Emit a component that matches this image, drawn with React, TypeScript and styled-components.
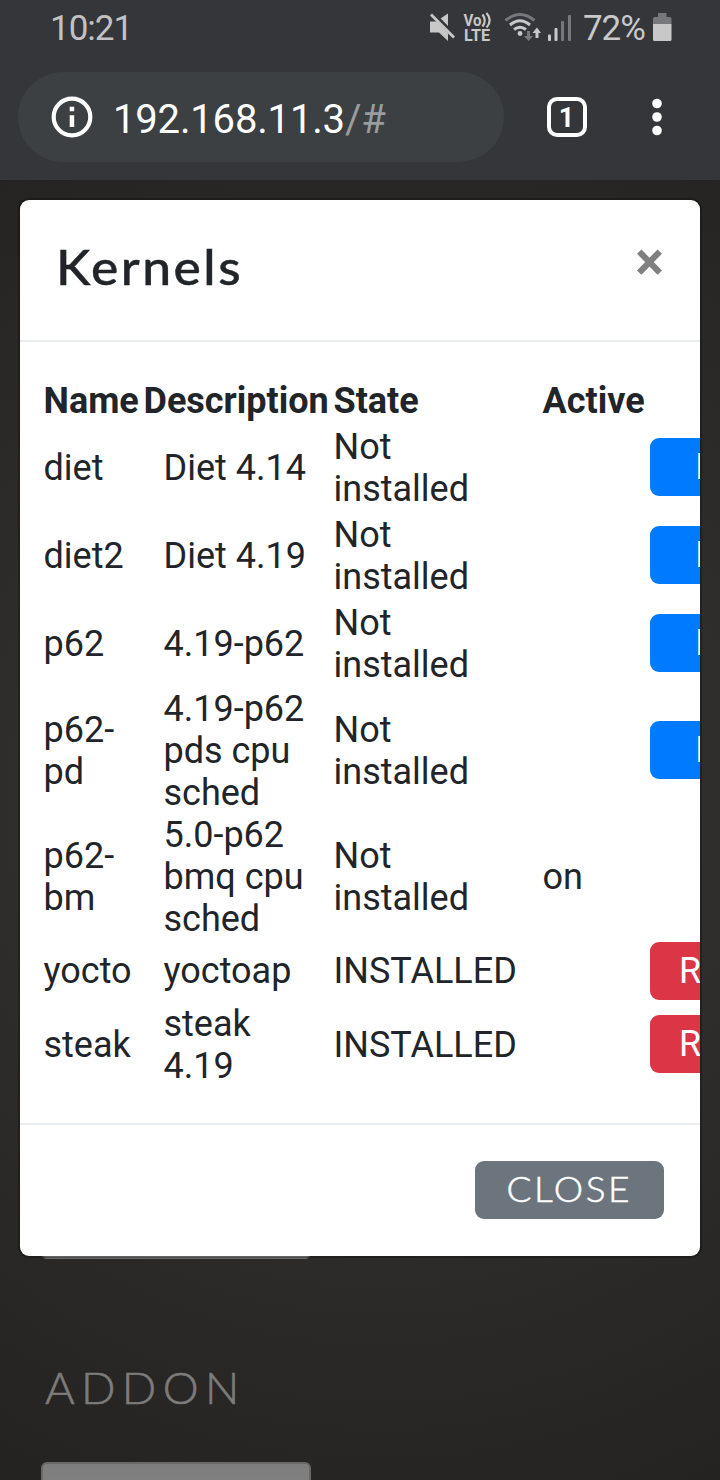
import React from "react";
import styled, { createGlobalStyle } from "styled-components";

const GlobalStyle = createGlobalStyle`
  * { box-sizing: border-box; }
  body { margin: 0; background: #262523; font-family: Roboto, "Liberation Sans", sans-serif; color: #212529; }
`;

const Screen = styled.div`
  width: 720px;
  height: 1480px;
  overflow: hidden;
  display: flex;
  flex-direction: column;
`;

const Chrome = styled.header`
  height: 180px;
  flex: none;
  background: #35363a;
`;

const StatusBar = styled.div`
  height: 56px;
  padding: 0 48px 0 50px;
  display: flex;
  justify-content: space-between;
  color: #c8c8c9;
  font-size: 35px;
  line-height: 58px;
`;

const Clock = styled.span`
  letter-spacing: -1px;
  color: #c2c2c3;
`;

const StatusIcons = styled.div`
  display: flex;
`;

const Percent = styled.span`
  width: 69px;
  margin-left: -1px;
  margin-right: 1px;
  letter-spacing: -1.1px;
  white-space: nowrap;
`;

const AddressBar = styled.div`
  margin-top: 16px;
  padding-left: 18px;
  height: 90px;
  display: flex;
  align-items: center;
`;

const UrlPill = styled.div`
  width: 486px;
  height: 90px;
  border-radius: 45px;
  background: #3c4043;
  display: flex;
  align-items: center;
  padding-left: 33px;
  gap: 20px;
`;

const Url = styled.span`
  color: #fff;
  font-size: 40px;
  line-height: 48px;
  padding-top: 6px;
  letter-spacing: -0.17px;
`;

const UrlPath = styled.span`
  color: #9b9c9e;
`;

const TabCount = styled.div`
  margin-left: 43px;
  width: 40px;
  height: 40px;
  border: 4.5px solid #fff;
  border-radius: 10px;
  color: #fff;
  font-size: 27px;
  font-weight: 700;
  line-height: 34px;
  text-align: center;
  text-indent: -1px;
`;

const MenuIcon = styled.svg`
  margin-left: 60px;
`;

const Page = styled.main`
  position: relative;
  flex: 1;
  padding: 0 41px;
  display: flex;
  flex-direction: column;
  background: radial-gradient(circle 760px at 380px 620px, #31302e 0%, #2f2e2c 45%, #242321 100%);
`;

const Card = styled.div<{ $height: number }>`
  width: 270px;
  height: ${(p) => p.$height}px;
  flex: none;
  border: 2px solid #686868;
  border-radius: 6px;
  background: linear-gradient(#7e7e7e, #848484);
`;

const Spacer = styled.div`
  height: 1029px;
  flex: none;
`;

const SectionTitle = styled.h2`
  margin: 102px 0 47px 4px;
  height: 54px;
  align-self: flex-start;
  font-family: Lato, sans-serif;
  font-weight: 300;
  font-size: 43px;
  line-height: 54px;
  letter-spacing: 6px;
  transform: scaleX(1.055);
  transform-origin: left;
  color: #7c7c7b;
  -webkit-text-stroke: 0.6px #7c7c7b;
`;

const Dialog = styled.section`
  position: absolute;
  top: 20px;
  left: 20px;
  width: 680px;
  height: 1056px;
  display: flex;
  flex-direction: column;
  background: #fff;
  border-radius: 9px;
  box-shadow: 0 0 0 2px rgba(0, 0, 0, 0.25);
  overflow: hidden;
`;

const DialogHeader = styled.div`
  height: 142px;
  padding: 35px 36px 0 36px;
  display: flex;
  justify-content: space-between;
  border-bottom: 2px solid #e9ecef;
`;

const DialogTitle = styled.h1`
  margin: 3px 0 0;
  font-family: Lato, sans-serif;
  font-weight: 500;
  font-size: 48px;
  line-height: 58px;
  letter-spacing: 2.3px;
  transform: scaleX(1.075);
  transform-origin: left;
  -webkit-text-stroke: 0.4px #212529;
`;

const DismissButton = styled.button`
  border: 0;
  padding: 0;
  background: none;
  height: 54px;
  font: 700 54px/54px Roboto, sans-serif;
  color: #808080;
`;

const DialogBody = styled.div`
  height: 781px;
  padding: 36px 0 0 23.5px;
  font-size: 36px;
  line-height: 42px;
`;

const HeadRow = styled.div`
  height: 46px;
  display: grid;
  grid-template-columns: 100px 190px 209px 107px;
  align-items: center;
  font-weight: 700;
`;

const Row = styled.div<{ $height: number }>`
  height: ${(p) => p.$height}px;
  display: grid;
  grid-template-columns: 120px 170px 209px 107px 190px;
  align-items: center;
`;

const Cell = styled.div<{ $width?: number }>`
  max-width: ${(p) => p.$width ?? 200}px;
`;

const ActionButton = styled.button<{ $danger?: boolean; $lift: number }>`
  height: 58px;
  border: 0;
  border-radius: 9px;
  padding: 0;
  margin: 0 0 ${(p) => p.$lift}px 0.5px;
  background: ${(p) => (p.$danger ? "#dc3545" : "#007bff")};
  color: #fff;
  font: 400 36px/58px Roboto, sans-serif;
  text-align: left;
  text-indent: ${(p) => (p.$danger ? 29 : 45)}px;
`;

const DialogFooter = styled.div`
  flex: 1;
  border-top: 2px solid #e9ecef;
  padding: 36px;
  display: flex;
  justify-content: flex-end;
`;

const CloseButton = styled.button`
  width: 189px;
  height: 58px;
  border: 0;
  border-radius: 9px;
  background: #6c757d;
  color: #fff;
  font: 300 35px/54px Lato, sans-serif;
  letter-spacing: 2.4px;
  padding: 0 0 4px;
`;

const CloseLabel = styled.span`
  display: inline-block;
  transform: scaleX(1.06);
  -webkit-text-stroke: 0.5px #fff;
`;

type Kernel = {
  name: string;
  description: string;
  installed?: boolean;
  active?: boolean;
  height: number;
};

const kernels: Kernel[] = [
  { name: "diet", description: "Diet 4.14", height: 88 },
  { name: "diet2", description: "Diet 4.19", height: 88 },
  { name: "p62", description: "4.19-p62", height: 88 },
  { name: "p62-pd", description: "4.19-p62 pds cpu sched", height: 126 },
  { name: "p62-bm", description: "5.0-p62 bmq cpu sched", active: true, height: 126 },
  { name: "yocto", description: "yoctoap", installed: true, height: 62 },
  { name: "steak", description: "steak 4.19", installed: true, height: 86 },
];

const StatusGlyphs = () => (
  <svg width="156" height="56" viewBox="428 0 156 56" fill="#c8c8c9">
    <path d="M430 21.5H436L448 13.5V41L439 32.5H430Z" />
    <path d="M430 11L458 40" stroke="#35363a" strokeWidth="5" />
    <path d="M431 14.5L454 37.5" stroke="#c8c8c9" strokeWidth="2.8" />
    <g fontFamily="Roboto, sans-serif" fontWeight="700">
      <text x="463.5" y="25.500" fontSize="16" textLength="18" lengthAdjust="spacingAndGlyphs">Vo</text>
      <text x="464" y="40.500" fontSize="16" textLength="26" lengthAdjust="spacingAndGlyphs">LTE</text>
    </g>
    <g fill="none" stroke="#c8c8c9" strokeWidth="2.2">
      <path d="M482.500 14.500Q487 20.500 482.500 26.500" />
      <path d="M486.500 13Q493 20.500 486.500 27.500" />
    </g>
    <g fill="none" strokeWidth="3">
      <path d="M505.500 20.500Q520 8.500 534.500 20.500" stroke="#77787b" />
      <path d="M510 25Q520 16.500 530 25" stroke="#c8c8c9" />
      <path d="M514 29.500Q520 25 526 29.500" stroke="#c8c8c9" />
    </g>
    <circle cx="520" cy="33.500" r="2.400" />
    <path d="M527 31H530V36H533L528.500 41L524 36H527Z" fill="#77787b" />
    <path d="M535.500 38V33H532.500L537 27.500L541 33H538.500V38Z" />
    <rect x="548" y="34.500" width="3" height="6.500" rx="1" />
    <rect x="554.500" y="28" width="3" height="13" rx="1" />
    <rect x="561" y="21" width="3" height="20" rx="1" fill="#77787b" />
    <rect x="568" y="15" width="3" height="26" rx="1" fill="#77787b" />
  </svg>
);

const Battery = () => (
  <svg width="19" height="56" viewBox="0 0 19 56">
    <path d="M0 24V18.500Q0 17 1.500 17H5V13H13.500V17H17Q18.500 17 18.500 18.500V24Z" fill="#77787b" />
    <path d="M0 24H18.500V39.500Q18.500 41 17 41H1.500Q0 41 0 39.500Z" fill="#c8c8c9" />
  </svg>
);

const InfoIcon = () => (
  <svg width="42" height="42" viewBox="0 0 42 42">
    <circle cx="21" cy="21" r="18.300" fill="none" stroke="#fff" strokeWidth="4.200" />
    <path d="M18.700 10.700H23.200V15.200H18.700ZM18.700 19.200H23.200V31H18.700Z" fill="#fff" />
  </svg>
);

export default function App() {
  return (
    <Screen>
      <GlobalStyle />
      <Chrome>
        <StatusBar>
          <Clock>10:21</Clock>
          <StatusIcons>
            <StatusGlyphs />
            <Percent>72%</Percent>
            <Battery />
          </StatusIcons>
        </StatusBar>
        <AddressBar>
          <UrlPill>
            <InfoIcon />
            <Url>
              192.168.11.3<UrlPath>/#</UrlPath>
            </Url>
          </UrlPill>
          <TabCount>1</TabCount>
          <MenuIcon width="20" height="40" viewBox="0 0 20 40" fill="#fff">
            <circle cx="10" cy="6.500" r="4.800" />
            <circle cx="10" cy="20" r="4.800" />
            <circle cx="10" cy="33.500" r="4.800" />
          </MenuIcon>
        </AddressBar>
      </Chrome>
      <Page>
        <Spacer />
        <Card $height={50} />
        <SectionTitle>ADDON</SectionTitle>
        <Card $height={60} />
        <Dialog>
          <DialogHeader>
            <DialogTitle>Kernels</DialogTitle>
            <DismissButton>×</DismissButton>
          </DialogHeader>
          <DialogBody>
            <HeadRow>
              <span>Name</span>
              <span>Description</span>
              <span>State</span>
              <span>Active</span>
            </HeadRow>
            {kernels.map((k) => (
              <Row key={k.name} $height={k.height}>
                <Cell $width={100}>{k.name}</Cell>
                <Cell $width={150}>{k.description}</Cell>
                <Cell $width={185}>{k.installed ? "INSTALLED" : "Not installed"}</Cell>
                <Cell>{k.active ? "on" : ""}</Cell>
                {!k.active && (
                  <ActionButton $danger={k.installed} $lift={k.height > 62 ? 2 : 0}>
                    {k.installed ? "REMOVE" : "INSTALL"}
                  </ActionButton>
                )}
              </Row>
            ))}
          </DialogBody>
          <DialogFooter>
            <CloseButton>
              <CloseLabel>CLOSE</CloseLabel>
            </CloseButton>
          </DialogFooter>
        </Dialog>
      </Page>
    </Screen>
  );
}
